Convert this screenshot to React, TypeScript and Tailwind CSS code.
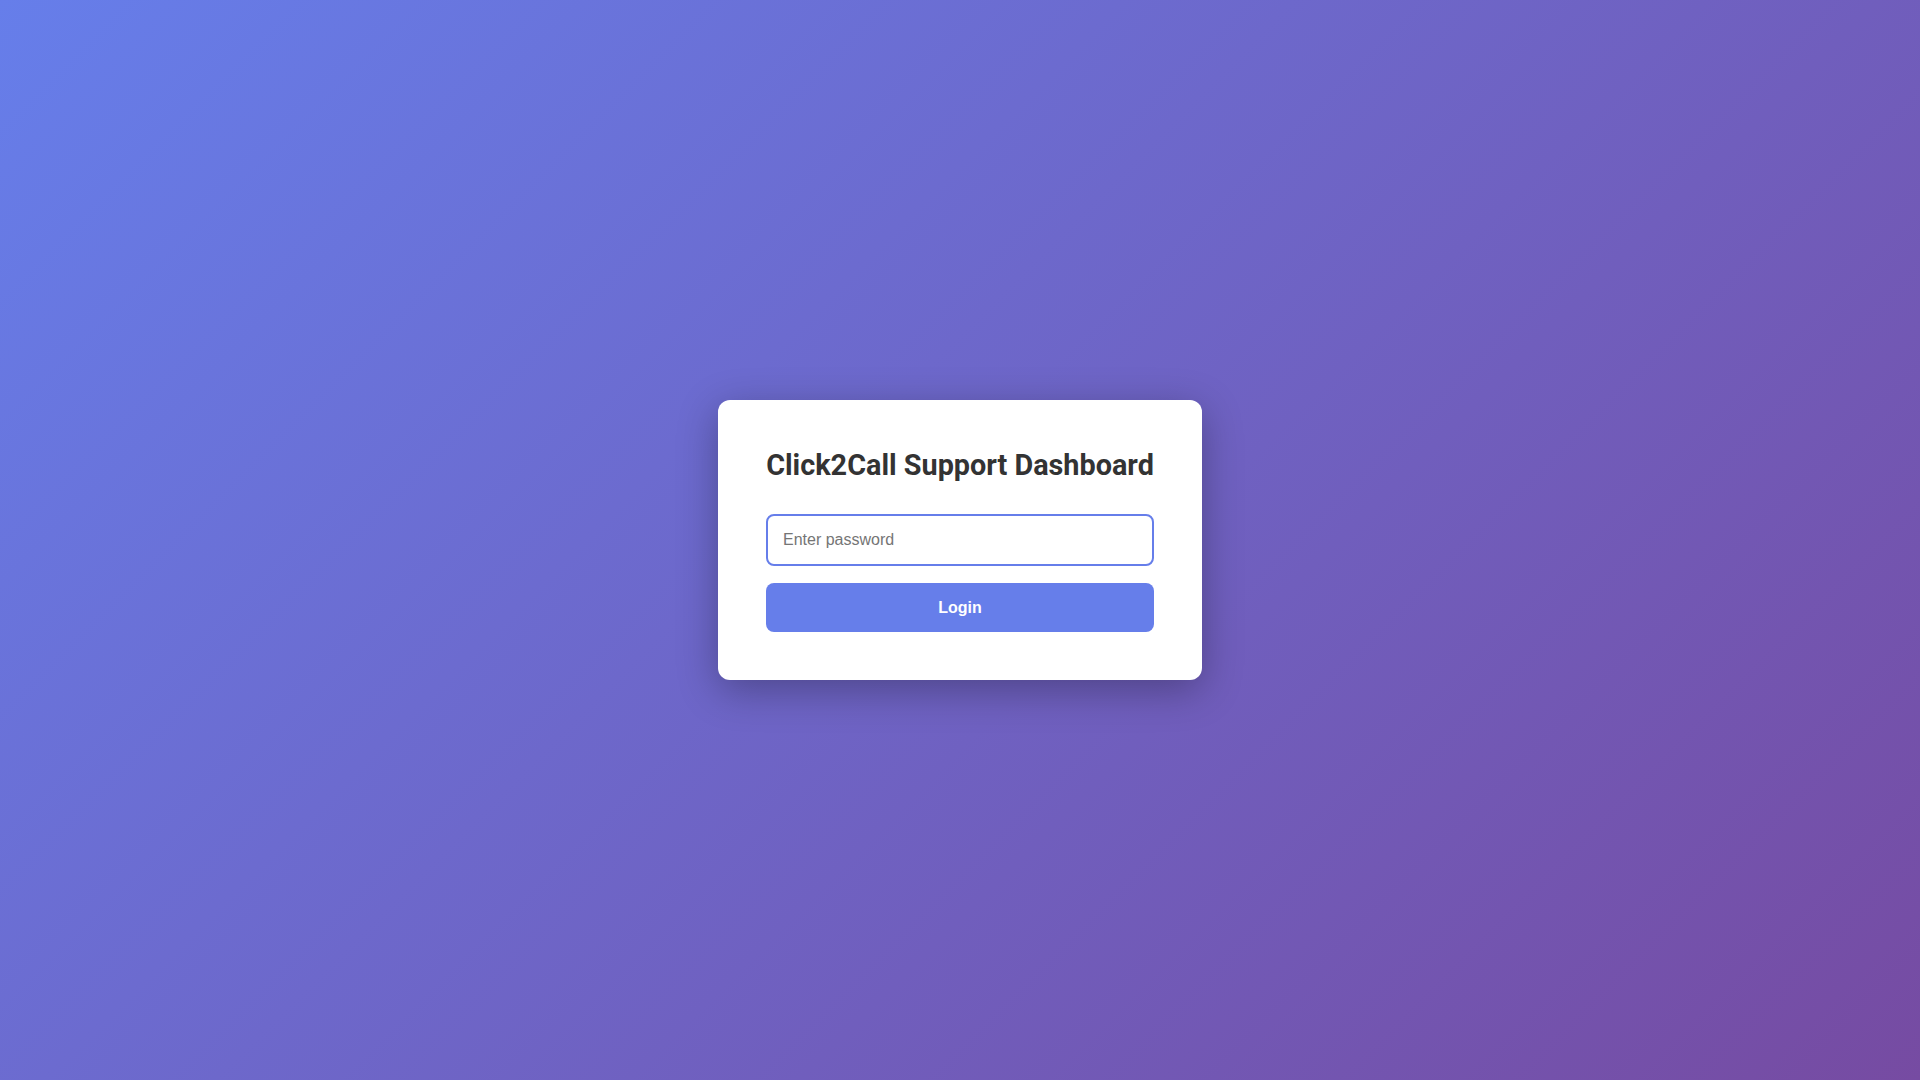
export default function App() {
  return (
    <div className="min-h-screen w-full flex items-center justify-center bg-[linear-gradient(135deg,#667eea_0%,#764ba2_100%)] font-['Roboto','Liberation_Sans',sans-serif]">
      <div className="w-[484px] bg-white rounded-xl p-12 shadow-[0_10px_40px_rgba(0,0,0,0.3)]">
        <h1 className="text-[28.8px] font-bold text-[#333] leading-[normal] mb-8 text-center whitespace-nowrap">
          Click2Call Support Dashboard
        </h1>
        <input
          type="password"
          placeholder="Enter password"
          className="block w-full px-[15px] py-[15px] border-2 border-[#667eea] rounded-lg text-base leading-[normal] font-['Liberation_Sans',Arial,sans-serif] outline-none placeholder:text-[#757575]"
        />
        <button className="block w-full mt-[17px] py-[15px] bg-[#667eea] text-white rounded-lg text-base leading-[19px] font-bold font-['Liberation_Sans',Arial,sans-serif]">
          Login
        </button>
      </div>
    </div>
  );
}
